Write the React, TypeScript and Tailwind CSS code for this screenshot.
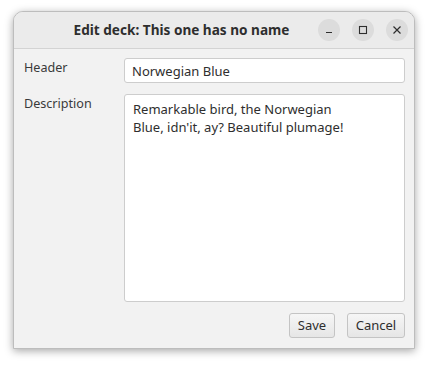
import React, { useState } from 'react';

const font = { fontFamily: '"Noto Sans", "Open Sans", sans-serif' };

const TitleButton: React.FC<{ children: React.ReactNode }> = ({ children }) => (
  <div className="w-[22px] h-[22px] rounded-full bg-[#dcdcdc] flex items-center justify-center text-[#2e2e2e]">
    {children}
  </div>
);

export default function App() {
  const [header, setHeader] = useState('Norwegian Blue');
  const [desc, setDesc] = useState("Remarkable bird, the Norwegian\nBlue, idn'it, ay? Beautiful plumage!");

  return (
    <div className="w-[428px] h-[366px] bg-white pl-[13px] pt-[11px]" style={font}>
      <div className="w-[402px] h-[338px] flex flex-col rounded-t-[10px] border border-[#bdbdbd] bg-[#f2f2f2] shadow-[0_2px_8px_rgba(0,0,0,0.35)] overflow-hidden">
        {/* Title bar */}
        <div className="h-[37px] shrink-0 flex items-center bg-[#ebebeb] border-b border-[#d3d3d3]">
          <div className="flex-1 text-center pl-[47px] text-[13.6px] font-bold text-[#2e2e2e]">
            Edit deck: This one has no name
          </div>
          <div className="flex items-center gap-[12px] pr-[6px] pl-[16px]">
            <TitleButton>
              <svg width="10" height="10" viewBox="0 0 10 10"><path d="M2 7.5h6" stroke="currentColor" strokeWidth="1.2" /></svg>
            </TitleButton>
            <TitleButton>
              <svg width="10" height="10" viewBox="0 0 10 10"><rect x="1.5" y="1.5" width="7" height="7" fill="none" stroke="currentColor" strokeWidth="1.1" /></svg>
            </TitleButton>
            <TitleButton>
              <svg width="10" height="10" viewBox="0 0 10 10"><path d="M1.5 1.5l7 7M8.5 1.5l-7 7" stroke="currentColor" strokeWidth="1.2" /></svg>
            </TitleButton>
          </div>
        </div>

        {/* Body */}
        <div className="flex-1 flex flex-col pl-[10px] pr-[9px] pt-[9px] pb-[10px]">
          <div className="flex-1 grid grid-cols-[100px_1fr] grid-rows-[25px_1fr] gap-y-[11px]">
            <div className="text-[12.6px] text-[#3a3a3a] pt-[1px]">Header</div>
            <input
              value={header}
              onChange={e => setHeader(e.target.value)}
              className="h-[25px] rounded-[3px] border border-[#cdcdcd] bg-white px-[7px] text-[13px] text-[#2e2e2e] outline-none"
              style={font}
            />
            <div className="text-[12.6px] text-[#3a3a3a] pt-[1px]">Description</div>
            <textarea
              value={desc}
              onChange={e => setDesc(e.target.value)}
              className="resize-none rounded-[3px] border border-[#cdcdcd] bg-white px-[8px] pt-[5px] text-[13px] leading-[18px] text-[#2e2e2e] outline-none"
              style={font}
            />
          </div>
          <div className="flex justify-end gap-[12px] pt-[11px]">
            <button className="h-[25px] w-[46px] rounded-[3px] border border-[#c4c4c4] bg-gradient-to-b from-[#f6f6f6] to-[#e6e6e6] text-[13px] text-[#2e2e2e]" style={font}>
              Save
            </button>
            <button className="h-[25px] w-[58px] rounded-[3px] border border-[#c4c4c4] bg-gradient-to-b from-[#f6f6f6] to-[#e6e6e6] text-[13px] text-[#2e2e2e]" style={font}>
              Cancel
            </button>
          </div>
        </div>
      </div>
    </div>
  );
}
